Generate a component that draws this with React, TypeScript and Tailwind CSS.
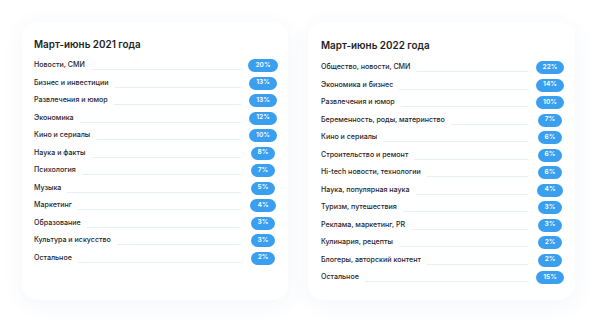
import React from "react";

type Row = [string, string];

const left: Row[] = [
  ["Новости, СМИ", "20%"],
  ["Бизнес и инвестиции", "13%"],
  ["Развлечения и юмор", "13%"],
  ["Экономика", "12%"],
  ["Кино и сериалы", "10%"],
  ["Наука и факты", "8%"],
  ["Психология", "7%"],
  ["Музыка", "5%"],
  ["Маркетинг", "4%"],
  ["Образование", "3%"],
  ["Культура и искусство", "3%"],
  ["Остальное", "2%"],
];

const right: Row[] = [
  ["Общество, новости, СМИ", "22%"],
  ["Экономика и бизнес", "14%"],
  ["Развлечения и юмор", "10%"],
  ["Беременность, роды, материнство", "7%"],
  ["Кино и сериалы", "6%"],
  ["Строительство и ремонт", "6%"],
  ["Hi-tech новости, технологии", "6%"],
  ["Наука, популярная наука", "4%"],
  ["Туризм, путешествия", "3%"],
  ["Реклама, маркетинг, PR", "3%"],
  ["Кулинария, рецепты", "2%"],
  ["Блогеры, авторский контент", "2%"],
  ["Остальное", "15%"],
];

function Card({ title, rows, cls }: { title: string; rows: Row[]; cls: string }) {
  return (
    <div
      className={`flex h-[278px] flex-col rounded-[16px] bg-white shadow-[0_4px_22px_rgba(40,90,170,0.06)] ${cls}`}
    >
      <div className="h-[14px] text-[9.9px] font-semibold leading-[14px] text-[#1e1e24]">{title}</div>
      <div className="flex flex-col">
        {rows.map(([label, pct]) => (
          <div key={label} className="flex h-[17.5px] items-center">
            <span className="whitespace-nowrap text-[7.1px] font-medium text-[#26262c]">{label}</span>
            <div className="ml-[6px] mr-[6px] mt-[8px] h-px flex-1 bg-[#e6effa]" />
            <div className="flex w-[32px] justify-center">
              <span className="flex h-[13px] items-center rounded-full bg-[#3b9ff0] px-[7px] text-[6.6px] font-semibold text-white">
                {pct}
              </span>
            </div>
          </div>
        ))}
      </div>
    </div>
  );
}

export default function App() {
  return (
    <div
      className="flex h-[331px] w-[600px] gap-[20px] bg-white pl-[22px] pt-[22px]"
      style={{ fontFamily: "Inter, 'Open Sans', sans-serif" }}
    >
      <Card
        title="Март-июнь 2021 года"
        rows={left}
        cls="w-[266px] pl-[12px] pr-[9px] pt-[15px] gap-[6px]"
      />
      <Card
        title="Март-июнь 2022 года"
        rows={right}
        cls="w-[267px] pl-[13px] pr-[9px] pt-[16px] gap-[7px]"
      />
    </div>
  );
}
